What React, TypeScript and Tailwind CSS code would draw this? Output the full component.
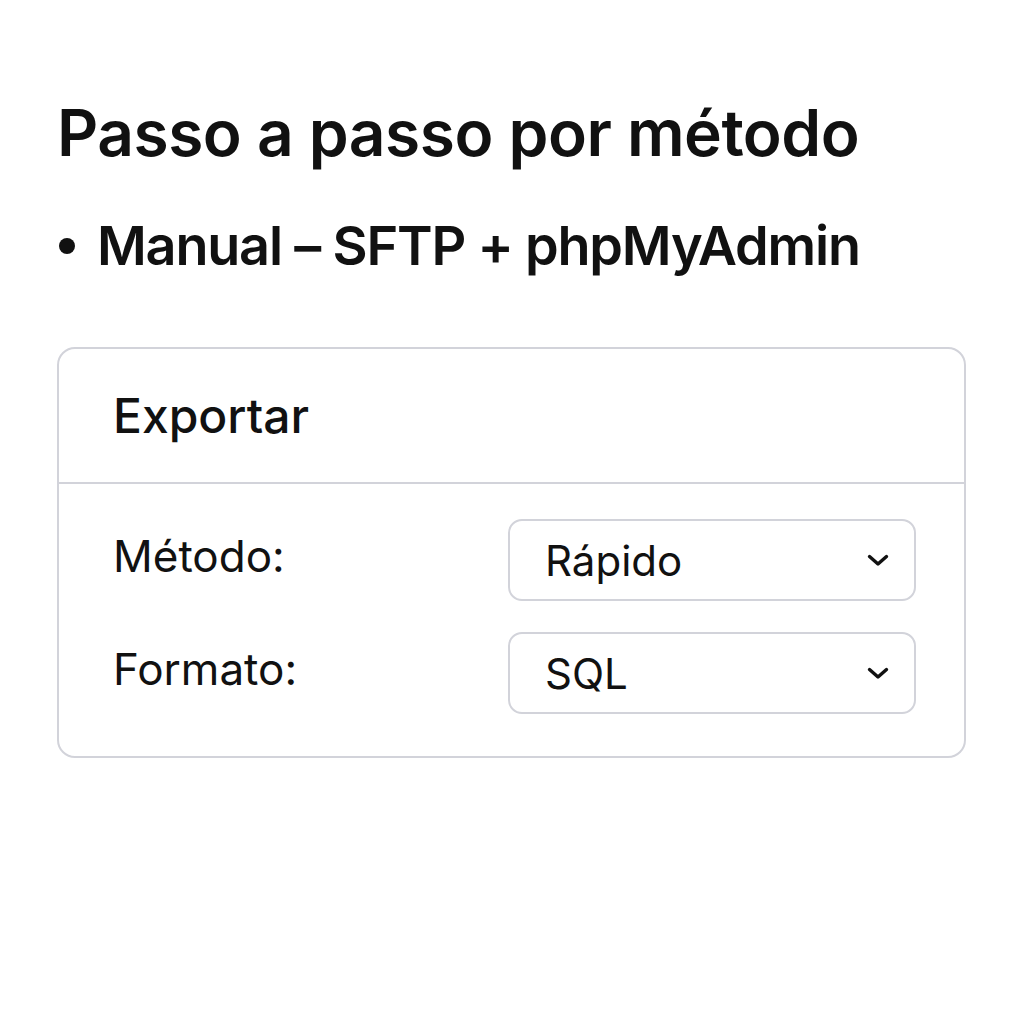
function Chevron() {
  return (
    <svg width="24" height="24" viewBox="0 0 24 24" fill="none" stroke="#111" strokeWidth="3.4" strokeLinecap="round" strokeLinejoin="round">
      <path d="M3.5 8.5l8.5 7.5 8.5-7.5" />
    </svg>
  );
}

function SelectBox({ value }: { value: string }) {
  return (
    <div className="flex h-[82px] w-[408px] items-center justify-between rounded-[14px] border-2 border-[#d2d3da] pl-[35px] pr-[24px]">
      <span className="text-[42px] text-[#111]">{value}</span>
      <Chevron />
    </div>
  );
}

export default function App() {
  return (
    <div className="min-h-[1024px] bg-white pl-[57px] pr-[58px] pt-[95px] font-['Inter',sans-serif] text-[#111]">
      <h1 className="text-[64px] font-semibold leading-[76px] tracking-[-0.5px]">Passo a passo por método</h1>
      <div className="mt-[40px] flex items-center gap-[22px] text-[54px] font-semibold leading-[70px] tracking-[-1.2px]">
        <span className="ml-[2px] h-[16px] w-[16px] rounded-full bg-[#111]" />
        <span>Manual – SFTP + phpMyAdmin</span>
      </div>

      <div className="mt-[66px] w-[909px] rounded-[18px] border-2 border-[#d2d3da]">
        <div className="flex h-[135px] items-center border-b-2 border-[#d2d3da] px-[54px]">
          <span className="text-[48px] font-medium">Exportar</span>
        </div>
        <div className="flex flex-col gap-[31px] pb-[42px] pl-[54px] pr-[48px] pt-[35px]">
          <div className="flex items-center justify-between">
            <span className="-mt-[8px] text-[44px]">Método:</span>
            <SelectBox value="Rápido" />
          </div>
          <div className="flex items-center justify-between">
            <span className="-mt-[8px] text-[44px]">Formato:</span>
            <SelectBox value="SQL" />
          </div>
        </div>
      </div>
    </div>
  );
}
